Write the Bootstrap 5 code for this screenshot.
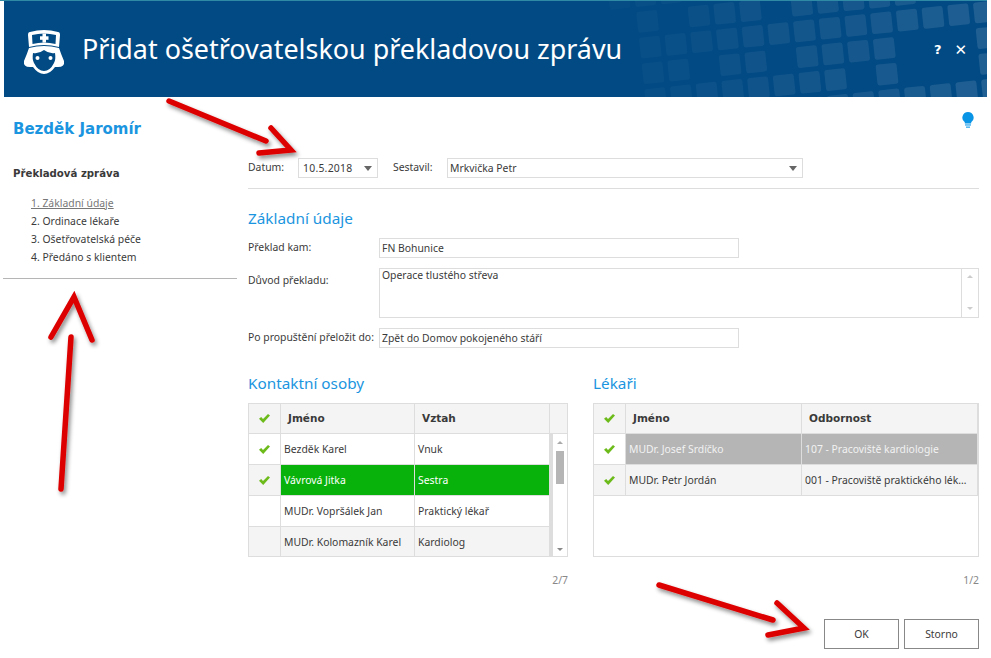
<!DOCTYPE html>
<html lang="en">
<head>
  <meta charset="UTF-8">
  <title>Přidat ošetřovatelskou překladovou zprávu</title>
  <link href="https://cdn.jsdelivr.net/npm/bootstrap@5.3.5/dist/css/bootstrap.min.css" rel="stylesheet">
  <style>
    html, body { height: 658px; overflow: hidden; }
    body { background: #fff; color: #3a3a3a; font-family: "Noto Sans", sans-serif; font-size: 10.4px; line-height: 1.3; position: relative; }
    .topline { height: 1px; background: #2f8aa6; margin-right: 4px; }
    .dlg-head { height: 96px; margin-left: 4px; margin-right: 4px; background: #024a84; color: #fff; position: relative; overflow: hidden; }
    .head-pattern { position: absolute; left: 0; top: 0; }
    .head-logo { margin-left: 19px; margin-right: 17px; margin-top: 4px; position: relative; }
    .head-title { font-size: 26.9px; position: relative; }
    .head-btns { position: absolute; right: 20px; top: 41px; font-family: "DejaVu Sans", sans-serif; font-size: 13px; font-weight: 700; line-height: 16px; gap: 13px; }
    .head-x { font-size: 15px; }
    .side { width: 237px; flex-shrink: 0; }
    .patient { font-family: "DejaVu Sans", sans-serif; font-size: 15px; font-weight: 700; color: #1b95e0; padding: 23px 0 0 13px; height: 70px; }
    .side-title { font-family: "DejaVu Sans", sans-serif; font-size: 10.2px; font-weight: 700; padding-left: 13px; height: 27px; }
    .side-list { padding-left: 31px; height: 84px; line-height: 18px; }
    .side-list .cur { color: #777; text-decoration: underline; }
    .side-line { border-top: 1px solid #b5b5b5; margin-left: 3px; }
    .main { width: 731px; margin-left: 11px; position: relative; }
    .bulb { position: absolute; right: 5px; top: 15px; }
    .tb-row { padding-top: 61px; height: 92px; border-bottom: 1px solid #ddd; }
    .tb-lbl { padding-top: 3px; }
    .area-lbl { padding-top: 6px; }
    .w-datum { width: 50px; }
    .w-date { width: 80px; }
    .w-sest { width: 54px; margin-left: 15px; }
    .w-who { width: 356px; padding-left: 3px; }
    .w-txt { width: 360px; }
    .fld { border: 1px solid #ddd; height: 20px; padding: 0 2px; line-height: 18px; background: #fff; position: relative; color: #3a3a3a; }
    .fld-date { padding-left: 4px; letter-spacing: .25px; }
    .fld-area { height: 50px; padding-right: 0; padding-top: 0; line-height: 13px; }
    .caret-dn { position: absolute; right: 5px; top: 7px; width: 0; height: 0; border: 4px solid transparent; border-top: 5px solid #666; border-bottom: 0; }
    .sec-title { font-family: "Noto Sans", sans-serif; font-size: 15.3px; line-height: 18px; color: #1b95e0; font-weight: 400; margin: 0 0 11px; }
    .sec-first { margin-top: 20px; }
    .form-lbl { width: 131px; flex-shrink: 0; white-space: nowrap; }
    .form-gap { margin-bottom: 10px; }
    .area-bar { width: 17px; border-left: 1px solid #ddd; position: relative; margin-top: -1px; }
    .two-grids { gap: 25px; margin-top: 26px; }
    .w-left { width: 320px; }
    .w-right { width: 386px; }
    .gridbox { height: 154px; border: 1px solid #ddd; position: relative; overflow: hidden; }
    .grid-row { height: 31px; border-bottom: 1px solid #ddd; flex-shrink: 0; }
    .grid-hdr { height: 30px; }
    .cell { border-right: 1px solid #ddd; padding: 1px 3px 0; display: flex; align-items: center; white-space: nowrap; overflow: hidden; min-width: 0; }
    .cell-chk { width: 32px; justify-content: center; border-right: 1px solid #ddd; flex-shrink: 0; display: flex; align-items: center; }
    .col-a { width: 134px; flex-shrink: 0; }
    .col-b { width: 135px; flex-shrink: 0; }
    .col-c { width: 176px; flex-shrink: 0; }
    .hdr { background: #f4f4f4; font-family: "DejaVu Sans", sans-serif; font-size: 10.5px; font-weight: 700; }
    .hdr .cell { padding: 0 3px 0 7px; }
    .alt { background: #f4f4f4; }
    .sel-green { background: #08b20a; color: #fff; }
    .sel-gray { background: #b5b5b5; color: #f2f2f2; }
    .sbar { width: 17px; flex-shrink: 0; border-left: 3px solid #ddd; position: relative; background: #fff; }
    .sb-thumb { position: absolute; left: 3px; top: 17px; width: 8px; height: 33px; background: #b5b5b5; }
    .sb-up, .sb-dn { position: absolute; left: 4px; width: 0; height: 0; border: 3px solid transparent; }
    .sb-up { top: 7px; border-bottom: 3px solid #aaa; border-top: 0; }
    .sb-dn { bottom: 7px; border-top: 3px solid #888; border-bottom: 0; }
    .sb-pale { border-top-color: #ccc; border-bottom-color: #ccc; left: 5px; }
    .pager { text-align: right; color: #888; height: 18px; margin-top: 17px; }
    .act-row { gap: 5px; margin-top: 27px; }
    .act-btn { width: 75px; height: 30px; border: 1px solid #888; background: #fff; color: #3a3a3a; font: inherit; padding: 1px 0 0; border-radius: 0; }
    .arrows { position: absolute; left: 0; top: 0; pointer-events: none; }
  </style>
</head>
<body>
  <div class="topline"></div>
  <div class="dlg-head d-flex align-items-center">
    <svg class="head-pattern" id="pattern" width="987" height="96"></svg>
    <svg class="head-logo" width="42" height="45" viewBox="0 0 42 45">
      <path d="M7 3 Q21 -1 35 3 Q37 3 37 6 L36 18 Q21 14 6 18 L5 6 Q5 3 7 3Z" fill="#fff"/>
      <path d="M9 6 Q21 3 33 6 L32.500 15 Q21 12 9.500 15Z" fill="#024a84"/>
      <rect x="19.500" y="4.500" width="3.500" height="9" fill="#fff"/><rect x="17" y="7.300" width="8.500" height="3.500" fill="#fff"/>
      <path d="M6 19 Q4 25 1 32 Q0 38 7 38 L10 38 Q15 45 21 45 Q27 45 32 38 L35 38 Q42 38 41 32 Q38 25 36 19 Q21 15 6 19Z" fill="#fff"/>
      <path d="M10 24 Q16 25 21 21 Q26 25 32 24 Q33 30 31 34 Q27 42 21 42 Q15 42 11 34 Q9 30 10 24Z" fill="#024a84"/>
      <circle cx="14.500" cy="29" r="2" fill="#fff"/><circle cx="27.500" cy="29" r="2" fill="#fff"/>
    </svg>
    <div class="head-title">Přidat ošetřovatelskou překladovou zprávu</div>
    <div class="head-btns d-flex align-items-center"><span>?</span><span class="head-x">✕</span></div>
  </div>

  <div class="d-flex">
    <div class="side">
      <div class="patient">Bezděk Jaromír</div>
      <div class="side-title">Překladová zpráva</div>
      <div class="side-list">
        <div class="cur">1. Základní údaje</div>
        <div>2. Ordinace lékaře</div>
        <div>3. Ošetřovatelská péče</div>
        <div>4. Předáno s klientem</div>
      </div>
      <div class="side-line"></div>
    </div>

    <div class="main">
      <svg class="bulb" width="12" height="17" viewBox="0 0 12 17">
        <path d="M6 0a5.600 5.600 0 0 1 3.200 10.200V11.500H2.800V10.200A5.600 5.600 0 0 1 6 0Z" fill="#0a94e6"/>
        <rect x="3" y="12.300" width="6" height="1.300" fill="#35aaf0"/><rect x="4" y="14.500" width="4" height="1.300" fill="#35aaf0"/>
      </svg>
      <div class="tb-row d-flex">
        <div class="tb-lbl w-datum">Datum:</div>
        <div class="fld fld-date w-date">10.5.2018<i class="caret-dn"></i></div>
        <div class="tb-lbl w-sest">Sestavil:</div>
        <div class="fld w-who">Mrkvička Petr<i class="caret-dn"></i></div>
      </div>
      <h5 class="sec-title sec-first">Základní údaje</h5>
      <div class="d-flex align-items-center form-gap"><div class="form-lbl">Překlad kam:</div><div class="fld w-txt">FN Bohunice</div></div>
      <div class="d-flex form-gap">
        <div class="form-lbl area-lbl">Důvod překladu:</div>
        <div class="fld fld-area flex-grow-1 d-flex justify-content-between">
          <span>Operace tlustého střeva</span>
          <div class="area-bar"><i class="sb-up sb-pale"></i><i class="sb-dn sb-pale"></i></div>
        </div>
      </div>
      <div class="d-flex align-items-center"><div class="form-lbl">Po propuštění přeložit do:</div><div class="fld w-txt">Zpět do Domov pokojeného stáří</div></div>

      <div class="d-flex two-grids">
        <div class="w-left">
          <h5 class="sec-title">Kontaktní osoby</h5>
          <div class="gridbox d-flex flex-column">
            <div class="grid-row grid-hdr hdr d-flex"><div class="cell-chk" data-chk></div><div class="cell col-a">Jméno</div><div class="cell col-b">Vztah</div><div class="flex-grow-1"></div></div>
            <div class="d-flex flex-grow-1">
              <div class="flex-grow-1">
                <div class="grid-row d-flex"><div class="cell-chk" data-chk></div><div class="cell col-a">Bezděk Karel</div><div class="cell flex-grow-1">Vnuk</div></div>
                <div class="grid-row d-flex"><div class="cell-chk alt" data-chk></div><div class="cell col-a sel-green">Vávrová Jitka</div><div class="cell sel-green flex-grow-1">Sestra</div></div>
                <div class="grid-row d-flex"><div class="cell-chk"></div><div class="cell col-a">MUDr. Vopršálek Jan</div><div class="cell flex-grow-1">Praktický lékař</div></div>
                <div class="grid-row d-flex alt"><div class="cell-chk"></div><div class="cell col-a">MUDr. Kolomazník Karel</div><div class="cell flex-grow-1">Kardiolog</div></div>
              </div>
              <div class="sbar"><i class="sb-up"></i><div class="sb-thumb"></div><i class="sb-dn"></i></div>
            </div>
          </div>
          <div class="pager">2/7</div>
        </div>
        <div class="w-right">
          <h5 class="sec-title">Lékaři</h5>
          <div class="gridbox d-flex flex-column">
            <div class="grid-row grid-hdr hdr d-flex"><div class="cell-chk" data-chk></div><div class="cell col-c">Jméno</div><div class="cell flex-grow-1">Odbornost</div></div>
            <div class="grid-row d-flex"><div class="cell-chk" data-chk></div><div class="cell col-c sel-gray">MUDr. Josef Srdíčko</div><div class="cell sel-gray flex-grow-1">107 - Pracoviště kardiologie</div></div>
            <div class="grid-row d-flex alt"><div class="cell-chk" data-chk></div><div class="cell col-c">MUDr. Petr Jordán</div><div class="cell flex-grow-1">001 - Pracoviště praktického lék…</div></div>
          </div>
          <div class="pager">1/2</div>
        </div>
      </div>
      <div class="d-flex justify-content-end act-row">
        <button class="act-btn">OK</button>
        <button class="act-btn">Storno</button>
      </div>
    </div>
  </div>

  <svg class="arrows" width="991" height="658" viewBox="0 0 991 658">
    <defs><filter id="sh" x="-20%" y="-20%" width="140%" height="140%"><feDropShadow dx="2" dy="3" stdDeviation="2" flood-color="#000" flood-opacity=".45"/></filter></defs>
    <g fill="none" stroke="#dd0000" stroke-width="5.500" stroke-linecap="round" stroke-linejoin="miter" filter="url(#sh)">
      <path d="M169 101 L266 141"/><path d="M271 128 L291 150 L259 153"/>
      <path d="M71 337 L61 489"/><path d="M51 337 L74 297 L92 340"/>
      <path d="M659 585 L773 620"/><path d="M777 603 L804 628 L768 635"/>
    </g>
  </svg>

  <script>
    // checkmarks
    document.querySelectorAll("[data-chk]").forEach(el => {
      el.innerHTML = '<svg width="11" height="9" viewBox="0 0 11 9"><path d="M0 4.800 L2.200 3 L4 5 L9 0 L11 1.400 L4.200 9 Z" fill="#6cbb1a"/></svg>';
    });

    // header squares: [row, first..last column of each run]
    const runs = [
      [-1, -3, -1],
      [0, -2, -2], [0, 0, 2], [0, 4, 8],
      [1, -2, 11],
      [2, -2, -1], [2, 1, 2], [2, 4, 7], [2, 11, 11],
      [3, -2, 5], [3, 7, 7], [3, 11, 11],
      [4, 4, 11]
    ];
    let out = "";
    runs.forEach(([j, from, to]) => {
      for (let i = from; i <= to; i++) {
        const cx = 699 + 25.7 * i + 2.7 * j - 4, cy = 16 - 2.7 * i + 25.7 * j - 1;
        const alpha = Math.max(0.015, 0.02 + (cx - 620) / 370 * 0.1);
        out += `<rect x="${cx - 10.5}" y="${cy - 10.5}" width="21" height="21" rx="2.5" fill="#fff" fill-opacity="${alpha.toFixed(3)}" transform="rotate(-6 ${cx} ${cy})"/>`;
      }
    });
    document.getElementById("pattern").innerHTML = out;
  </script>
  <script src="https://cdn.jsdelivr.net/npm/bootstrap@5.3.5/dist/js/bootstrap.bundle.min.js"></script>
</body>
</html>
